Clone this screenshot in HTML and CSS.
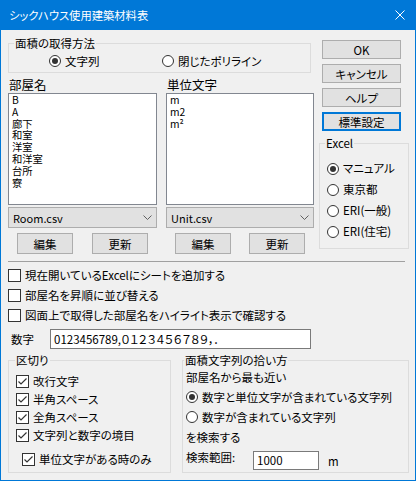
FILE: index.html
```html
<!DOCTYPE html>
<html lang="ja">
<head>
<meta charset="utf-8">
<title>シックハウス使用建築材料表</title>
<link rel="stylesheet" href="styles.css">
</head>
<body>
<div class="window">
  <div class="titlebar">
    <span class="title">シックハウス使用建築材料表</span>
    <svg class="close" width="10" height="10" viewBox="0 0 10 10"><path d="M0.5 0.5 L9.5 9.5 M9.5 0.5 L0.5 9.5" stroke="#fff" stroke-width="1" fill="none"/></svg>
  </div>
  <div class="content">
    <div class="top">
      <div class="left">
        <fieldset class="group g-method">
          <legend>面積の取得方法</legend>
          <div class="method-row">
            <div class="radio r-first"><span class="rb checked"></span><span>文字列</span></div>
            <div class="radio"><span class="rb"></span><span>閉じたポリライン</span></div>
          </div>
        </fieldset>
        <div class="lists">
          <div class="col col-room">
            <div class="col-label">部屋名</div>
            <div class="listbox">
              <div>B</div>
              <div>A</div>
              <div>廊下</div>
              <div>和室</div>
              <div>洋室</div>
              <div>和洋室</div>
              <div>台所</div>
              <div>寮</div>
            </div>
            <div class="combo"><span>Room.csv</span><svg class="chev" width="9" height="5" viewBox="0 0 9 5"><path d="M0.5 0.5 L4.5 4.5 L8.5 0.5" stroke="#606060" stroke-width="1" fill="none"/></svg></div>
            <div class="btn-row"><div class="btn small">編集</div><div class="btn small">更新</div></div>
          </div>
          <div class="col col-unit">
            <div class="col-label">単位文字</div>
            <div class="listbox">
              <div>m</div>
              <div>m2</div>
              <div>m²</div>
            </div>
            <div class="combo"><span>Unit.csv</span><svg class="chev" width="9" height="5" viewBox="0 0 9 5"><path d="M0.5 0.5 L4.5 4.5 L8.5 0.5" stroke="#606060" stroke-width="1" fill="none"/></svg></div>
            <div class="btn-row"><div class="btn small">編集</div><div class="btn small">更新</div></div>
          </div>
        </div>
      </div>
      <div class="right">
        <div class="btn side">OK</div>
        <div class="btn side">キャンセル</div>
        <div class="btn side">ヘルプ</div>
        <div class="btn side default">標準設定</div>
        <fieldset class="group g-excel">
          <legend>Excel</legend>
          <div class="radio row21"><span class="rb checked"></span><span>マニュアル</span></div>
          <div class="radio row21"><span class="rb"></span><span>東京都</span></div>
          <div class="radio row21"><span class="rb"></span><span>ERI(一般)</span></div>
          <div class="radio row21"><span class="rb"></span><span>ERI(住宅)</span></div>
        </fieldset>
      </div>
    </div>
    <div class="separator"></div>
    <div class="checks">
      <div class="check row20"><span class="cb"></span><span>現在開いているExcelにシートを追加する</span></div>
      <div class="check row20"><span class="cb"></span><span>部屋名を昇順に並び替える</span></div>
      <div class="check row20"><span class="cb"></span><span>図面上で取得した部屋名をハイライト表示で確認する</span></div>
    </div>
    <div class="num-row">
      <span class="num-label">数字</span>
      <div class="textbox num-input">0123456789,０１２３４５６７８９，．</div>
    </div>
    <div class="bottom">
      <fieldset class="group g-sep">
        <legend>区切り</legend>
        <div class="check row18"><span class="cb on"><svg width="11" height="11" viewBox="0 0 11 11"><path d="M1.5 5.5 L4 8 L9.5 2.5" stroke="#333" stroke-width="1.2" fill="none"/></svg></span><span>改行文字</span></div>
        <div class="check row18"><span class="cb on"><svg width="11" height="11" viewBox="0 0 11 11"><path d="M1.5 5.5 L4 8 L9.5 2.5" stroke="#333" stroke-width="1.2" fill="none"/></svg></span><span>半角スペース</span></div>
        <div class="check row18"><span class="cb on"><svg width="11" height="11" viewBox="0 0 11 11"><path d="M1.5 5.5 L4 8 L9.5 2.5" stroke="#333" stroke-width="1.2" fill="none"/></svg></span><span>全角スペース</span></div>
        <div class="check row18"><span class="cb on"><svg width="11" height="11" viewBox="0 0 11 11"><path d="M1.5 5.5 L4 8 L9.5 2.5" stroke="#333" stroke-width="1.2" fill="none"/></svg></span><span>文字列と数字の境目</span></div>
        <div class="check row18 sub"><span class="cb on"><svg width="11" height="11" viewBox="0 0 11 11"><path d="M1.5 5.5 L4 8 L9.5 2.5" stroke="#333" stroke-width="1.2" fill="none"/></svg></span><span>単位文字がある時のみ</span></div>
      </fieldset>
      <fieldset class="group g-area">
        <legend>面積文字列の拾い方</legend>
        <div class="row20">部屋名から最も近い</div>
        <div class="radio row20"><span class="rb checked"></span><span>数字と単位文字が含まれている文字列</span></div>
        <div class="radio row20"><span class="rb"></span><span>数字が含まれている文字列</span></div>
        <div class="row20">を検索する</div>
        <div class="search-row">
          <span class="search-label">検索範囲:</span>
          <div class="textbox search-input">1000</div>
          <span class="unit">m</span>
        </div>
      </fieldset>
    </div>
  </div>
</div>
</body>
</html>
```

FILE: styles.css
```css
* { box-sizing: border-box; }
html, body { margin: 0; padding: 0; }
body {
  width: 416px;
  height: 481px;
  overflow: hidden;
  background: #f0f0f0;
  font-family: "Noto Sans CJK JP", "Noto Sans", sans-serif;
  font-size: 11.5px;
  color: #000;
  font-feature-settings: "palt";
}
.window {
  width: 416px;
  height: 481px;
  border: 1px solid #0078d7;
  border-top: 0;
  background: #f0f0f0;
}
.titlebar {
  height: 30px;
  background: #0078d7;
  display: flex;
  align-items: center;
  padding: 0 10px 0 8px;
  color: #fff;
}
.title { flex: 1; font-size: 11.3px; line-height: 16px; }
.close { display: block; }

.content { padding: 7px 0 0 7px; }

.group {
  margin: 0;
  padding: 0;
  border: 1px solid #dcdcdc;
  min-width: 0;
}
.group legend {
  padding: 0 1px;
  font-size: 11.5px;
  line-height: 13px;
}

.radio { display: flex; align-items: center; gap: 4px; }
.rb {
  width: 12px;
  height: 12px;
  flex: none;
  border: 1px solid #333;
  border-radius: 50%;
  background: #fff;
  display: flex;
  align-items: center;
  justify-content: center;
}
.rb.checked::after {
  content: "";
  width: 6px;
  height: 6px;
  border-radius: 50%;
  background: #333;
}
.check { display: flex; align-items: center; gap: 4px; }
.cb {
  width: 13px;
  height: 13px;
  flex: none;
  border: 1px solid #333;
  background: #fff;
  display: flex;
}
.cb svg { display: block; }

.row18 { height: 18px; line-height: 18px; }
.row20 { height: 20px; line-height: 20px; }
.row21 { height: 21px; line-height: 21px; }

.btn {
  background: #e1e1e1;
  border: 1px solid #adadad;
  display: flex;
  align-items: center;
  justify-content: center;
  font-size: 11.5px;
}

.top { display: flex; }
.left { width: 306px; }
.g-method { width: 303px; padding: 4px 0 4px 40px; }
.g-method legend { margin-left: -35px; }
.method-row { display: flex; height: 14px; align-items: center; }
.r-first { width: 113px; }

.lists { display: flex; gap: 9px; margin-top: 4px; }
.col-room { width: 149px; }
.col-unit { width: 148px; }
.col-label { font-size: 12.5px; line-height: 16px; height: 16px; padding-left: 1px; }
.listbox {
  height: 112px;
  border: 1px solid #828790;
  background: #fff;
  padding: 0 3px;
  font-size: 10.3px;
  line-height: 11.8px;
}
.combo {
  margin-top: 2px;
  height: 21px;
  background: #e1e1e1;
  border: 1px solid #adadad;
  display: flex;
  align-items: center;
  justify-content: space-between;
  padding: 0 4px 0 4px;
  font-size: 11px;
}
.chev { display: block; }
.btn-row { display: flex; justify-content: space-between; padding: 0 9px; margin-top: 5px; }
.small { width: 56px; height: 21px; }

.right { width: 90px; margin-left: 5px; padding-top: 3px; }
.side { width: 79px; height: 19px; margin-left: 3px; margin-bottom: 5px; }
.default { border: 2px solid #0078d7; }
.g-excel { width: 90px; margin-top: 6px; padding: 8px 0 6px 7px; }
.g-excel legend { margin-left: -2px; }

.separator { width: 397px; height: 1px; background: #a0a0a0; margin-top: 7px; }
.checks { margin-top: 3px; }

.num-row { display: flex; align-items: center; height: 20px; margin-top: 4px; }
.num-label { width: 42px; padding-left: 3px; }
.textbox {
  background: #fff;
  border: 1px solid #7a7a7a;
  padding-left: 3px;
  white-space: nowrap;
  overflow: hidden;
}
.num-input { width: 261px; height: 20px; line-height: 18px; }

.bottom { display: flex; margin-top: 5px; }
.g-sep { width: 163px; padding: 5px 0 4px 7px; }
.g-sep legend { margin-left: -1px; }
.sub { margin-top: 6px; padding-left: 6px; }
.g-area { width: 227px; margin-left: 11px; padding: 0 0 1px 3px; }
.g-area legend { margin-left: -2px; }
.search-row { display: flex; align-items: flex-start; height: 20px; margin-top: 4px; }
.search-label { width: 67px; line-height: 12px; }
.search-input { width: 66px; height: 19px; line-height: 17px; }
.unit { margin-left: 9px; line-height: 20px; }
```
